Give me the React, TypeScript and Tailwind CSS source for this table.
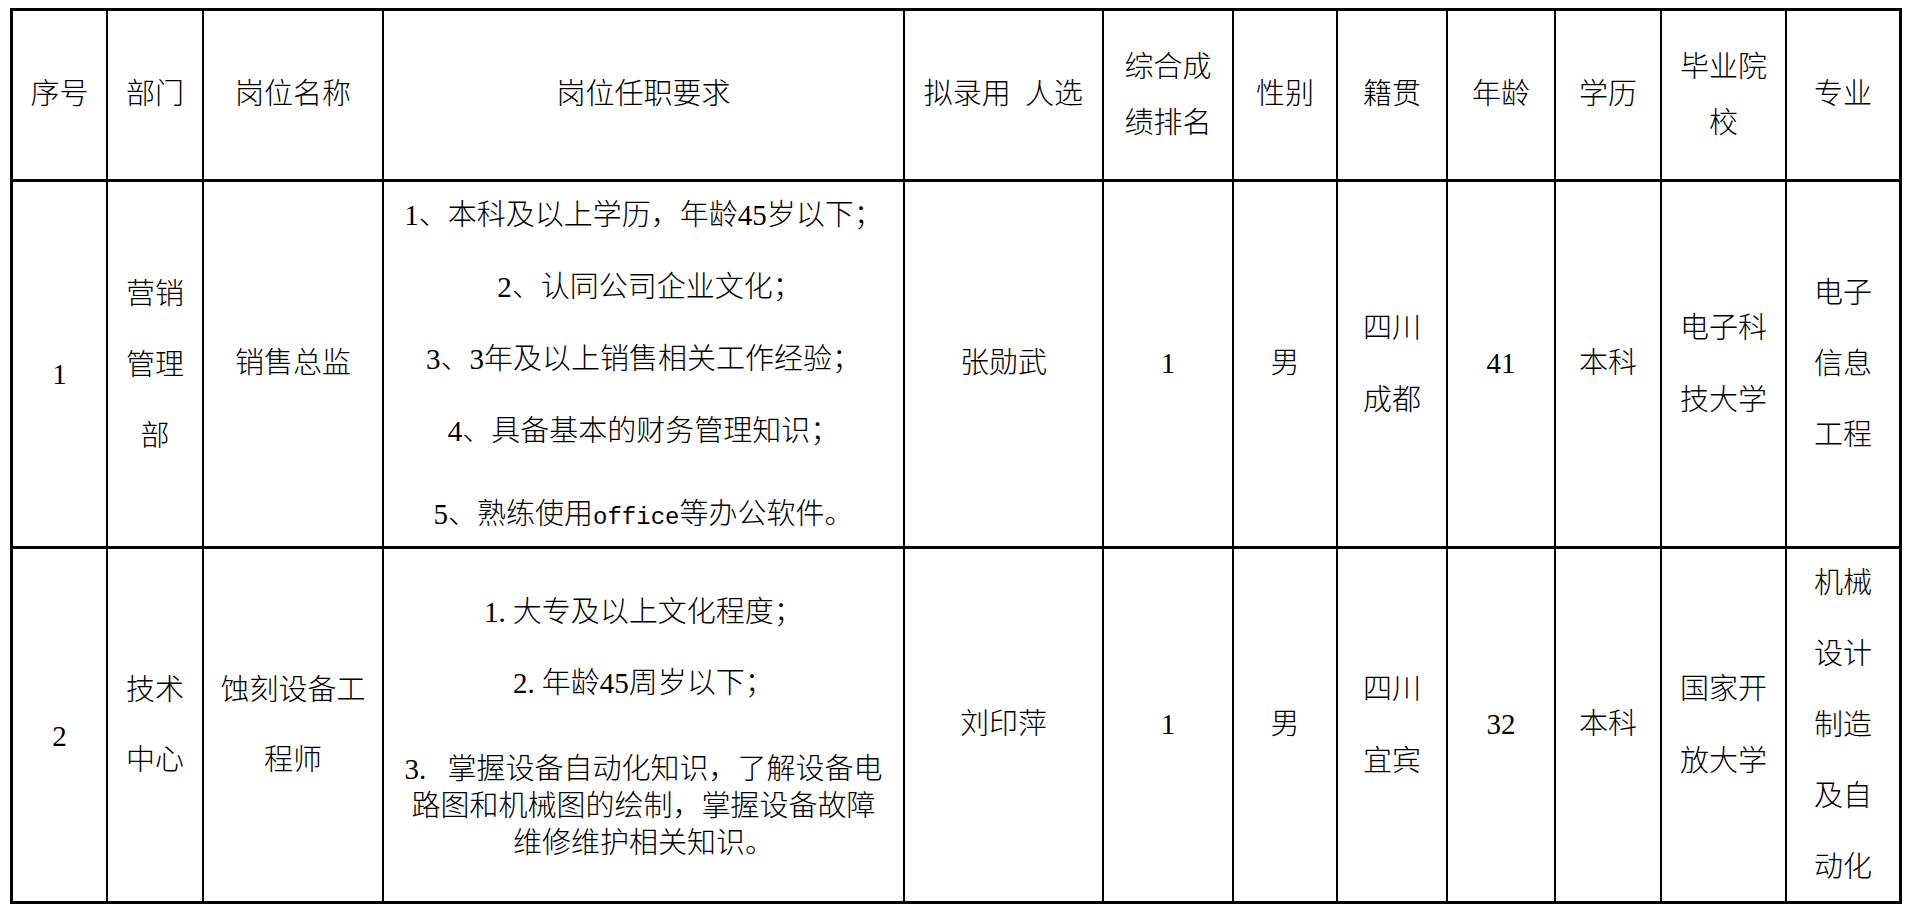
import type { ReactNode } from 'react'

// 拟录用人员名单表：列宽/行高按截图量出（px）
const COLS = 'grid-cols-[95px_96px_180px_521px_199px_130px_104px_110px_108px_106px_125px_115px]'
const ROWS = 'grid-rows-[171px_367px_355px]'

function Cell({ children, className = '' }: { children?: ReactNode; className?: string }) {
  return (
    <div className={`flex flex-col items-center justify-center border-r-2 border-b-[3px] border-black text-center ${className}`}>
      {children}
    </div>
  )
}

// 多行单元格，每行一个 div
function Lines({ items, lh, className = '' }: { items: string[]; lh: string; className?: string }) {
  return (
    <Cell className={className}>
      {items.map((t) => (
        <div key={t} className={lh}>{t}</div>
      ))}
    </Cell>
  )
}

// 宋体里的句点是半角宽，这里补一点间距
const Dot = () => <span className="mr-[7px]">.</span>

export default function App() {
  return (
    <div className="min-h-screen bg-white pl-[10px] pt-[8px] text-black">
      <div
        className={`grid w-max ${COLS} ${ROWS} border-l-[3px] border-t-[3px] border-black text-[29px] font-light [font-family:'Liberation_Serif','Noto_Sans_CJK_SC',serif] [word-spacing:7px]`}
      >
        {/* 表头 */}
        <Cell>序号</Cell>
        <Cell>部门</Cell>
        <Cell>岗位名称</Cell>
        <Cell>岗位任职要求</Cell>
        <Cell>拟录用 人选</Cell>
        <Lines items={['综合成', '绩排名']} lh="leading-[56px]" />
        <Cell>性别</Cell>
        <Cell>籍贯</Cell>
        <Cell>年龄</Cell>
        <Cell>学历</Cell>
        <Lines items={['毕业院', '校']} lh="leading-[56px]" />
        <Cell className="border-r-[3px]">专业</Cell>

        {/* 第一行 */}
        <Cell className="pt-[21px]">1</Cell>
        <Lines items={['营销', '管理', '部']} lh="leading-[71px]" className="pt-[3px]" />
        <Cell>销售总监</Cell>
        <Cell className="pt-[4px]">
          <div className="leading-[72px]">1、本科及以上学历，年龄45岁以下；</div>
          <div className="pl-[12px] leading-[72px]">2、认同公司企业文化；</div>
          <div className="leading-[72px]">3、3年及以上销售相关工作经验；</div>
          <div className="leading-[72px]">4、具备基本的财务管理知识；</div>
          <div className="mt-[11px] leading-[72px]">
            5、熟练使用<span className="text-[24px] [font-family:'Liberation_Mono',monospace]">office</span>等办公软件。
          </div>
        </Cell>
        <Cell>张勋武</Cell>
        <Cell>1</Cell>
        <Cell>男</Cell>
        <Lines items={['四川', '成都']} lh="leading-[72px]" />
        <Cell>41</Cell>
        <Cell>本科</Cell>
        <Lines items={['电子科', '技大学']} lh="leading-[72px]" />
        <Lines items={['电子', '信息', '工程']} lh="leading-[71px]" className="border-r-[3px]" />

        {/* 第二行 */}
        <Cell className="pt-[23px]">2</Cell>
        <Lines items={['技术', '中心']} lh="leading-[70px]" />
        <Lines items={['蚀刻设备工', '程师']} lh="leading-[70px]" />
        <Cell className="justify-start pt-[45px]">
          <div className="leading-[37px]">1<Dot />大专及以上文化程度；</div>
          <div className="mt-[34px] leading-[37px]">2<Dot />年龄45周岁以下；</div>
          <div className="mt-[49px] leading-[37px]">
            3<Dot /> 掌握设备自动化知识，了解设备电
            <br />
            路图和机械图的绘制，掌握设备故障
            <br />
            维修维护相关知识。
          </div>
        </Cell>
        <Cell>刘印萍</Cell>
        <Cell>1</Cell>
        <Cell>男</Cell>
        <Lines items={['四川', '宜宾']} lh="leading-[72px]" />
        <Cell>32</Cell>
        <Cell>本科</Cell>
        <Lines items={['国家开', '放大学']} lh="leading-[72px]" />
        <Lines items={['机械', '设计', '制造', '及自', '动化']} lh="leading-[71px]" className="border-r-[3px]" />
      </div>
    </div>
  )
}
